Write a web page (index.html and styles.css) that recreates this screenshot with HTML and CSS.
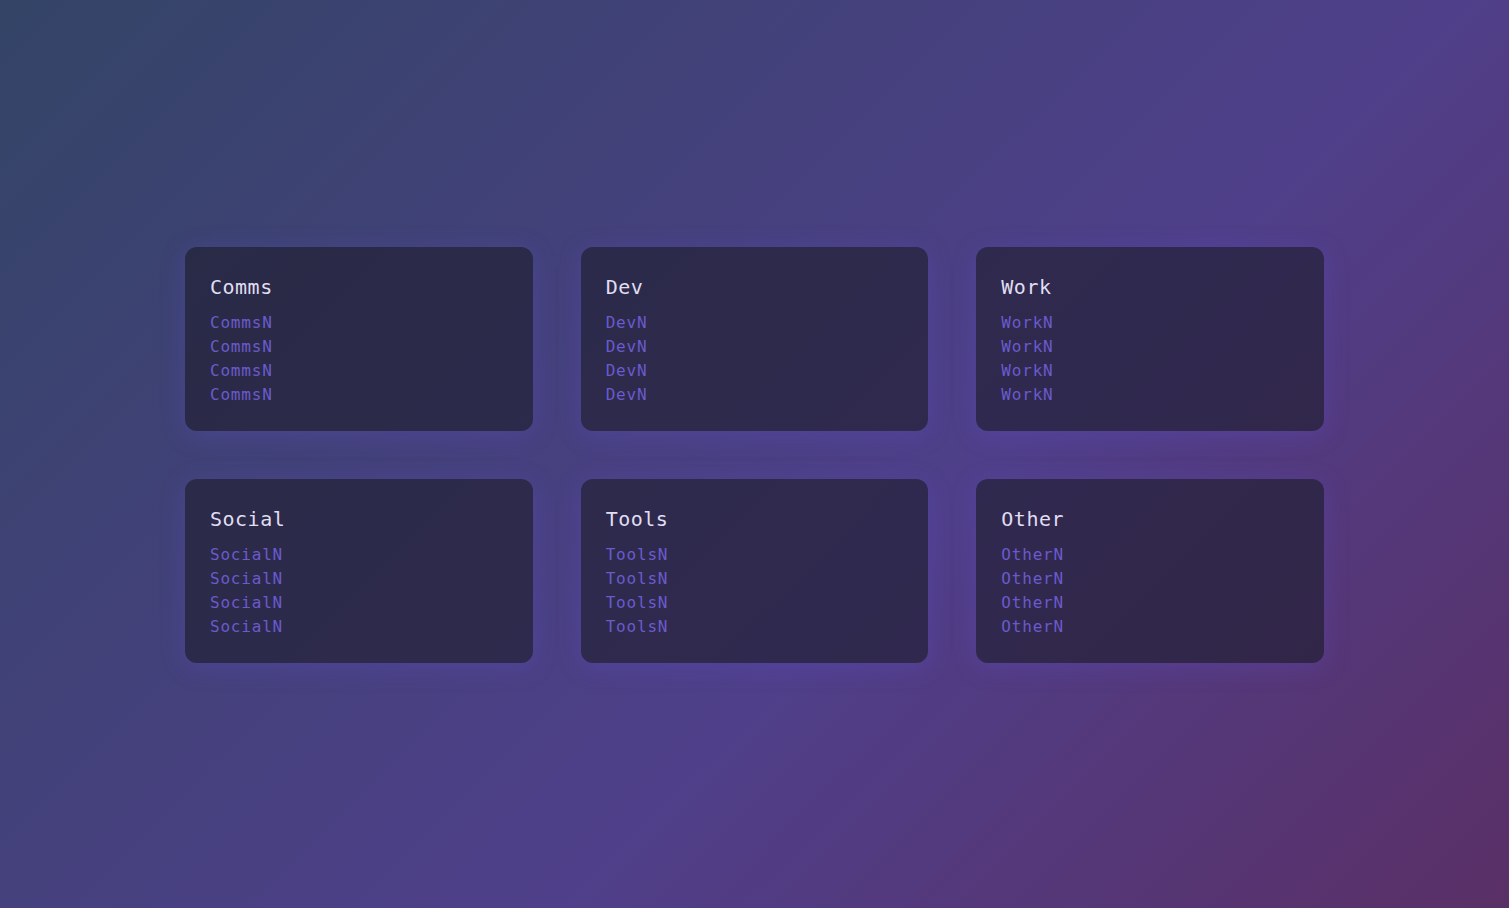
FILE: index.html
```html
<!DOCTYPE html>
<html lang="en">
<head>
<meta charset="utf-8">
<title>Links</title>
<link rel="stylesheet" href="styles.css">
</head>
<body>
<main class="grid">
  <section class="card">
    <h2 class="card-title">Comms</h2>
    <ul class="links">
      <li><a href="#">CommsN</a></li>
      <li><a href="#">CommsN</a></li>
      <li><a href="#">CommsN</a></li>
      <li><a href="#">CommsN</a></li>
    </ul>
  </section>
  <section class="card">
    <h2 class="card-title">Dev</h2>
    <ul class="links">
      <li><a href="#">DevN</a></li>
      <li><a href="#">DevN</a></li>
      <li><a href="#">DevN</a></li>
      <li><a href="#">DevN</a></li>
    </ul>
  </section>
  <section class="card">
    <h2 class="card-title">Work</h2>
    <ul class="links">
      <li><a href="#">WorkN</a></li>
      <li><a href="#">WorkN</a></li>
      <li><a href="#">WorkN</a></li>
      <li><a href="#">WorkN</a></li>
    </ul>
  </section>
  <section class="card">
    <h2 class="card-title">Social</h2>
    <ul class="links">
      <li><a href="#">SocialN</a></li>
      <li><a href="#">SocialN</a></li>
      <li><a href="#">SocialN</a></li>
      <li><a href="#">SocialN</a></li>
    </ul>
  </section>
  <section class="card">
    <h2 class="card-title">Tools</h2>
    <ul class="links">
      <li><a href="#">ToolsN</a></li>
      <li><a href="#">ToolsN</a></li>
      <li><a href="#">ToolsN</a></li>
      <li><a href="#">ToolsN</a></li>
    </ul>
  </section>
  <section class="card">
    <h2 class="card-title">Other</h2>
    <ul class="links">
      <li><a href="#">OtherN</a></li>
      <li><a href="#">OtherN</a></li>
      <li><a href="#">OtherN</a></li>
      <li><a href="#">OtherN</a></li>
    </ul>
  </section>
</main>
</body>
</html>
```

FILE: styles.css
```css
html, body {
  margin: 0;
  padding: 0;
  height: 100%;
}

body {
  min-height: 100vh;
  box-sizing: border-box;
  padding-top: 1px;
  display: flex;
  align-items: center;
  justify-content: center;
  font-family: "DejaVu Sans Mono", "Liberation Mono", monospace;
  background: linear-gradient(135deg, #334466 0%, #4f3f8a 60%, #5a2f66 100%);
}

.grid {
  width: 1139px;
  display: grid;
  grid-template-columns: repeat(3, 1fr);
  gap: 48px;
}

.card {
  background: rgba(32, 31, 48, 0.66);
  border-radius: 12px;
  padding: 25px 25px 24px;
  box-shadow: 0 4px 24px rgba(100, 80, 210, 0.3);
}

.card-title {
  margin: 0 0 9px;
  font-size: 20px;
  line-height: 30px;
  font-weight: normal;
  letter-spacing: 0.5px;
  color: #e0def2;
}

.links {
  list-style: none;
  margin: 0;
  padding: 0;
}

.links li {
  font-size: 16px;
  line-height: 24px;
  letter-spacing: 0.8px;
}

.links a {
  color: #6a5acd;
  text-decoration: none;
}
```
